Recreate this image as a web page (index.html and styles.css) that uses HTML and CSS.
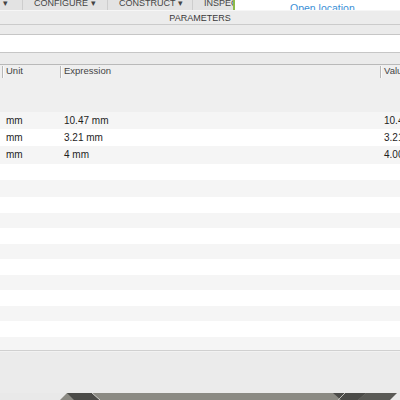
FILE: index.html
```html
<!DOCTYPE html>
<html lang="en">
<head>
    <meta charset="UTF-8">
    <title>Parameters</title>
    <link rel="stylesheet" href="styles.css">
</head>
<body>
    <div class="toolbar">
        <div class="tb-tabs">
            <div class="tb-item tb-first">▾</div>
            <div class="tb-item">CONFIGURE ▾</div>
            <div class="tb-item">CONSTRUCT ▾</div>
            <div class="tb-item">INSPECT ▾</div>
        </div>
        <div class="tb-link"><a href="#">Open location</a></div>
    </div>

    <div class="panel">
        <div class="panel-title">PARAMETERS</div>
        <div class="panel-band"></div>
        <div class="search-box"></div>
        <div class="panel-band band-low"></div>

        <div class="table">
            <div class="row head">
                <div class="cell">Unit</div>
                <div class="cell">Expression</div>
                <div class="cell">Value</div>
            </div>
            <div class="table-gap"></div>

            <div class="row data">
                <div class="cell">mm</div>
                <div class="cell">10.47 mm</div>
                <div class="cell">10.470 mm</div>
            </div>
            <div class="row data">
                <div class="cell">mm</div>
                <div class="cell">3.21 mm</div>
                <div class="cell">3.210 mm</div>
            </div>
            <div class="row data">
                <div class="cell">mm</div>
                <div class="cell">4 mm</div>
                <div class="cell">4.000 mm</div>
            </div>

            <div class="row blank first-blank"></div>
            <div class="row blank tall"></div>
            <div class="row blank"></div>
            <div class="row blank"></div>
            <div class="row blank"></div>
            <div class="row blank"></div>
            <div class="row blank"></div>
            <div class="row blank"></div>
            <div class="row blank"></div>
            <div class="row blank"></div>
            <div class="row blank"></div>
            <div class="row blank last"></div>
        </div>

        <div class="panel-footer"></div>
    </div>

    <!-- edge of the 3D viewport under the dialog -->
    <svg class="viewport" width="400" height="7" viewBox="0 0 400 7">
        <rect x="0" y="0" width="400" height="7" fill="#e9e9e9"/>
        <polygon points="67,0 366,0 372,7 60,7" fill="#8b8a83"/>
        <polygon points="67,0 92,0 100,7 74,7" fill="#4b4b48"/>
        <polygon points="333,0 366,0 358,7 341,7" fill="#4b4b48"/>
        <polygon points="366,0 397,0 390,7 358,7" fill="#5a5a56"/>
        <line x1="92" y1="0" x2="100" y2="7" stroke="#cfcfcb" stroke-width="1"/>
        <line x1="345" y1="0" x2="338" y2="7" stroke="#bdbdb8" stroke-width="1"/>
    </svg>
</body>
</html>
```

FILE: styles.css
```css
body {
    margin: 0;
    width: 400px;
    height: 400px;
    overflow: hidden;
    background: #ebebeb;
    font-family: 'Liberation Sans', Arial, sans-serif;
    color: #222;
}

/* top toolbar, scrolled so only the bottom of the labels shows */
.toolbar {
    display: flex;
    height: 10px;
    overflow: hidden;
}

.tb-tabs {
    display: flex;
    width: 233px;
    flex: 0 0 233px;
    background: #e3e3e3;
    border-right: 2px solid #8dbb4a;
    overflow: hidden;
}

.tb-item {
    flex: 0 0 85px;
    box-sizing: border-box;
    padding-left: 11px;
    border-left: 1px solid #cdcdcd;
    font-size: 9px;
    line-height: 6px;
    color: #454545;
    white-space: nowrap;
}

.tb-first {
    flex: 0 0 22px;
    border-left: none;
    padding-left: 3px;
}

.tb-link {
    flex: 1;
    background: #fff;
    padding: 1px 0 0 55px;
    font-size: 10.5px;
    line-height: 14px;
    white-space: nowrap;
}

.tb-link a {
    color: #3b8fd6;
    text-decoration: none;
}

/* parameters dialog */
.panel {
    background: #ececec;
    border-top: 1px solid #f6f6f6;
}

.panel-title {
    height: 13px;
    font-size: 9px;
    line-height: 14px;
    color: #3a3a3a;
    text-align: center;
    border-bottom: 1px solid #cbcbcb;
}

.panel-band {
    height: 9px;
    background: #ebebeb;
    border-bottom: 1px solid #c6c6c6;
}

.band-low {
    height: 11px;
    border-bottom-color: #b9b9b9;
}

.search-box {
    height: 17px;
    background: #fff;
    border-bottom: 1px solid #c6c6c6;
}

.table {
    background: #efefef;
}

.row {
    display: grid;
    grid-template-columns: 58px 320px 1fr;
    padding-left: 2px;
    white-space: nowrap;
    overflow: hidden;
}

.cell {
    font-size: 10px;
    overflow: hidden;
}

.head {
    height: 12px;
    padding-top: 1px;
}

.head .cell {
    border-left: 1px solid #b8b8b8;
    box-shadow: inset 1px 0 0 #fafafa;
    padding-left: 3px;
    font-size: 9.5px;
    line-height: 10px;
    color: #444;
}

.table-gap {
    height: 34px;
}

.data {
    height: 17px;
    background: #f5f5f5;
}

.data:nth-child(even) {
    background: #fff;
}

.data .cell {
    padding-left: 4px;
    line-height: 17px;
    color: #1e1e1e;
}

.blank {
    height: 15.56px;
    background: #f5f5f5;
}

.blank:nth-child(even) {
    background: #fff;
}

.first-blank {
    height: 16px;
    background: #eeeeee;
    border-top: 1px solid #f5f5f5;
}

.tall {
    height: 17px;
}

.last {
    height: 13px;
    border-bottom: 1px solid #d0d0d0;
}

.panel-footer {
    height: 41px;
    background: #ebebeb;
    border-top: 1px solid #f2f2f2;
}

.viewport {
    display: block;
}
```
